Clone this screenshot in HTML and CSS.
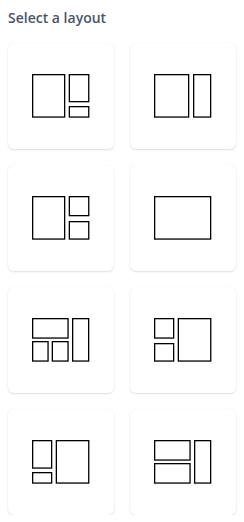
FILE: index.html
```html
<!DOCTYPE html>
<html>
<head>
<meta charset="utf-8">
<link rel="stylesheet" href="styles.css">
</head>
<body>
<div class="panel">
  <h2 class="title">Select a layout</h2>
  <div class="grid">
    <div class="card"><svg class="ico" viewBox="0 0 58 44"><rect x="0.65" y="0.65" width="32" height="42.4"/><rect x="37.35" y="0.65" width="19.4" height="27"/><rect x="37.35" y="32.65" width="19.4" height="10.4"/></svg></div>
    <div class="card"><svg class="ico" viewBox="0 0 58 44"><rect x="0.65" y="0.65" width="34" height="42.4"/><rect x="39.65" y="0.65" width="17" height="42.4"/></svg></div>
    <div class="card"><svg class="ico" viewBox="0 0 58 44"><rect x="0.65" y="0.65" width="32" height="42.4"/><rect x="37.35" y="0.65" width="19.4" height="19"/><rect x="37.35" y="25.65" width="19.4" height="17.4"/></svg></div>
    <div class="card"><svg class="ico" viewBox="0 0 58 44"><rect x="0.65" y="0.65" width="56" height="42.4"/></svg></div>
    <div class="card"><svg class="ico" viewBox="0 0 58 44"><rect x="0.65" y="0.65" width="35.4" height="19.4"/><rect x="0.65" y="23.65" width="15.4" height="19.4"/><rect x="20.35" y="23.65" width="15.7" height="19.4"/><rect x="40.65" y="0.65" width="16" height="42.4"/></svg></div>
    <div class="card"><svg class="ico" viewBox="0 0 58 44"><rect x="0.65" y="0.65" width="19" height="19.4"/><rect x="0.65" y="25.65" width="19" height="17.4"/><rect x="24.35" y="0.65" width="32.4" height="42.4"/></svg></div>
    <div class="card"><svg class="ico" viewBox="0 0 58 44"><rect x="0.65" y="0.65" width="19" height="27.4"/><rect x="0.65" y="32.65" width="19" height="10.4"/><rect x="24.35" y="0.65" width="32.4" height="42.4"/></svg></div>
    <div class="card"><svg class="ico" viewBox="0 0 58 44"><rect x="0.65" y="0.65" width="35.4" height="19.4"/><rect x="0.65" y="23.65" width="35.4" height="19.4"/><rect x="40.65" y="0.65" width="16" height="42.4"/></svg></div>
  </div>
</div>
</body>
</html>
```
FILE: styles.css
```css
html, body {
  margin: 0;
  padding: 0;
  background: #ffffff;
}
.panel {
  padding: 8px 8px 0 8px;
  width: 228px;
}
.title {
  margin: 0;
  font-family: "Open Sans", "Liberation Sans", sans-serif;
  font-weight: 600;
  font-size: 14px;
  line-height: 20px;
  color: #4b5565;
  height: 35px;
}
.grid {
  display: grid;
  grid-template-columns: 106px 106px;
  grid-auto-rows: 106px;
  gap: 16px;
}
.card {
  background: #ffffff;
  border-radius: 6px;
  box-shadow: 0 1px 2px rgba(20, 60, 60, 0.14), 0 0 1px rgba(20, 60, 60, 0.08);
  display: flex;
  align-items: center;
  justify-content: center;
}
.ico {
  width: 58px;
  height: 44px;
  display: block;
}
.ico rect {
  fill: none;
  stroke: #000;
  stroke-width: 1.3;
}
```
